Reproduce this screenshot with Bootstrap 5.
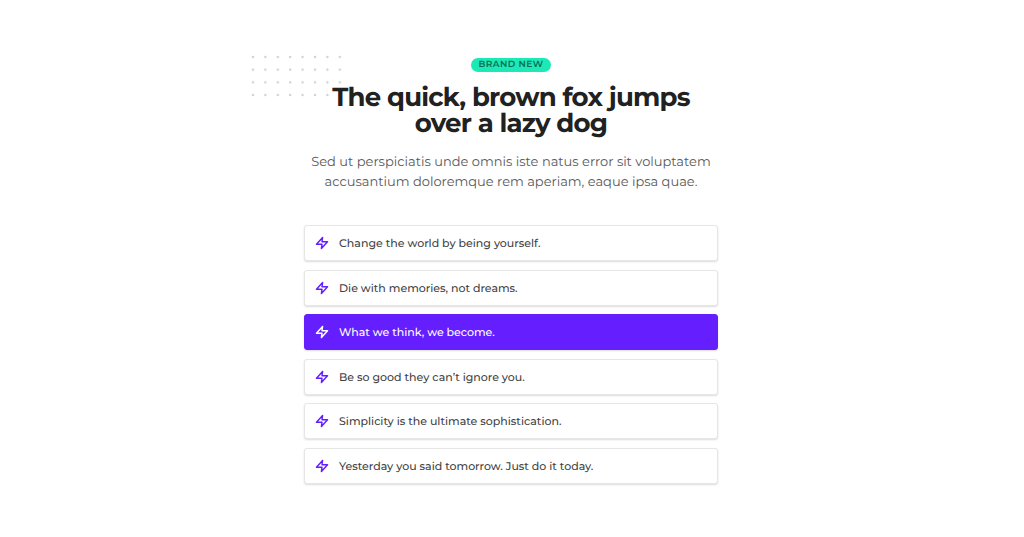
<!DOCTYPE html>
<html lang="en">
<head>
<meta charset="utf-8">
<meta name="viewport" content="width=device-width, initial-scale=1">
<title>The quick, brown fox</title>
<link rel="stylesheet" href="https://cdn.jsdelivr.net/npm/bootstrap@5.3.0/dist/css/bootstrap.min.css">
<style>
  body { font-family: Montserrat, Inter, "Open Sans", sans-serif; color: #424242; background: #fff; text-rendering: geometricPrecision; }
  .feature-section { padding: 58px 18px 48px 16px; }
  .feature-wrap { max-width: 414px; }
  .tag-pill { background: #1de9b6; color: #0b6b53; font-size: 9px; line-height: 14px; font-weight: 600; letter-spacing: .05em; padding: 0 8px; }
  .headline { font-size: 26px; line-height: 26px; font-weight: 700; letter-spacing: -.03em; color: #212121; margin: 12px 0 16px; }
  .intro { font-size: 13px; line-height: 20px; color: #5a5a5a; margin-bottom: 33px; }
  .dot-grid { left: -53px; top: -3px; z-index: -1; }
  .quote-list { min-height: 259px; }
  .quote-item { font-size: 11px; font-weight: 500; line-height: 18px; padding: 8px 10px; gap: 10px; border: 1px solid #e6e6e6; border-radius: 3px; box-shadow: 0 1px 2px rgba(0,0,0,.14); background: #fff; }
  .quote-item svg { color: #651fff; }
  .quote-item.selected { background: #651fff; border-color: #651fff; color: #fff; }
  .quote-item.selected svg { color: #fff; }
</style>
</head>
<body>
<svg class="d-none" aria-hidden="true">
  <symbol id="bolt" viewBox="0 0 24 24"><path d="M13 2.5 2.5 14H12l-1 7.5L21.500 10H12l1-7.500z" fill="none" stroke="currentColor" stroke-width="2.500" stroke-linecap="round" stroke-linejoin="round"/></symbol>
</svg>
<main class="feature-section">
  <div class="feature-wrap mx-auto position-relative">
    <svg class="dot-grid position-absolute" width="92" height="43" aria-hidden="true">
      <defs><pattern id="dots" width="12.4" height="12.7" patternUnits="userSpaceOnUse"><circle cx="2" cy="2" r="1.2" fill="#d0d0d0"/></pattern></defs>
      <rect width="92" height="43" fill="url(#dots)"/>
    </svg>
    <header class="text-center d-flex flex-column align-items-center">
      <span class="tag-pill rounded-pill text-uppercase">Brand new</span>
      <h1 class="headline">The quick, brown fox jumps<br>over a lazy dog</h1>
      <p class="intro text-nowrap">Sed ut perspiciatis unde omnis iste natus error sit voluptatem<br>accusantium doloremque rem aperiam, eaque ipsa quae.</p>
    </header>
    <ul class="quote-list list-unstyled d-flex flex-column justify-content-between mb-0">
      <li class="quote-item d-flex align-items-center"><svg width="14" height="14" aria-hidden="true"><use href="#bolt"/></svg><span>Change the world by being yourself.</span></li>
      <li class="quote-item d-flex align-items-center"><svg width="14" height="14" aria-hidden="true"><use href="#bolt"/></svg><span>Die with memories, not dreams.</span></li>
      <li class="quote-item selected d-flex align-items-center"><svg width="14" height="14" aria-hidden="true"><use href="#bolt"/></svg><span>What we think, we become.</span></li>
      <li class="quote-item d-flex align-items-center"><svg width="14" height="14" aria-hidden="true"><use href="#bolt"/></svg><span>Be so good they can’t ignore you.</span></li>
      <li class="quote-item d-flex align-items-center"><svg width="14" height="14" aria-hidden="true"><use href="#bolt"/></svg><span>Simplicity is the ultimate sophistication.</span></li>
      <li class="quote-item d-flex align-items-center"><svg width="14" height="14" aria-hidden="true"><use href="#bolt"/></svg><span>Yesterday you said tomorrow. Just do it today.</span></li>
    </ul>
  </div>
</main>
<script src="https://cdn.jsdelivr.net/npm/bootstrap@5.3.0/dist/js/bootstrap.bundle.min.js"></script>
</body>
</html>
